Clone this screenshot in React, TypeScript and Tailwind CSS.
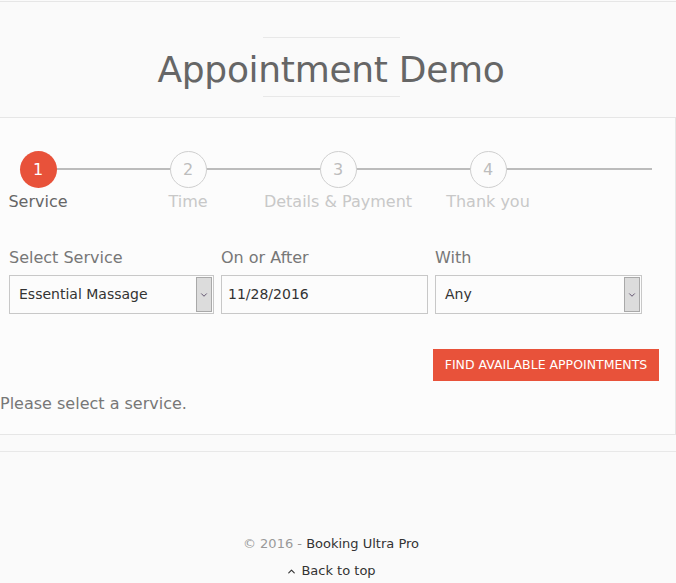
import { ChevronDown, ChevronUp } from "lucide-react";

const font = "font-['DejaVu_Sans',Verdana,sans-serif]";

const steps = [
  { n: 1, label: "Service", active: true },
  { n: 2, label: "Time" },
  { n: 3, label: "Details & Payment" },
  { n: 4, label: "Thank you" },
];

function SelectBox({ value }: { value: string }) {
  return (
    <div className="flex h-[39px] w-full items-stretch border border-[#c8c8c8] bg-[#fcfcfc]">
      <span className="flex flex-1 items-center pl-[9px] text-[14px] text-[#333]">{value}</span>
      <span className="my-px mr-px flex w-[16px] items-center justify-center border border-[#a9a9a9] bg-[#dcdcdc]">
        <ChevronDown className="size-[10px] text-[#4a3a5a]" strokeWidth={2} />
      </span>
    </div>
  );
}

export default function App() {
  return (
    <div className={`${font} min-h-[583px] w-[676px] overflow-hidden bg-[#fafafa]`}>
      <div className="h-px bg-[#e6e6e6] mt-px" />

      {/* title */}
      <div className="flex flex-col items-center pr-[14px] pt-[35px]">
        <div className="h-px w-[137px] bg-[#e8e8e8]" />
        <h1 className="mt-[10px] text-[36px] leading-[44px] tracking-[-0.3px] text-[#666]">Appointment Demo</h1>
        <div className="mt-[4px] h-px w-[137px] bg-[#e8e8e8]" />
      </div>

      {/* card */}
      <div className="mt-[20px] h-[318px] border-y border-r border-[#e6e6e6] bg-[#fcfcfc] pt-[33px]">
        {/* stepper */}
        <div className="relative h-[66px]">
          <div className="absolute left-[37px] top-[17px] h-[2px] w-[615px] bg-[#bcbcbc]" />
          {steps.map((s, i) => (
            <div
              key={s.n}
              className={[
                "absolute top-0 flex w-[160px] flex-col items-center",
                i === 0 ? "left-[-42px]" : i === 1 ? "left-[108px]" : i === 2 ? "left-[258px]" : "left-[408px]",
              ].join(" ")}
            >
              <span
                className={[
                  "relative flex size-[37px] items-center justify-center rounded-full text-[16px]",
                  s.active
                    ? "bg-[#e8523a] text-white"
                    : "border border-[#cfcfcf] bg-[#fcfcfc] text-[#bdbdbd]",
                ].join(" ")}
              >
                {s.n}
              </span>
              <span
                className={[
                  "mt-[3px] whitespace-nowrap text-[16px] leading-[22px]",
                  s.active ? "text-[#666]" : "text-[#c8c8c8]",
                ].join(" ")}
              >
                {s.label}
              </span>
            </div>
          ))}
        </div>

        {/* form */}
        <div className="mt-[31px] grid grid-cols-[205px_207px_207px] gap-x-[7px] pl-[9px]">
          <div className="flex flex-col gap-[7px]">
            <label className="text-[16px] leading-[20px] text-[#777]">Select Service</label>
            <SelectBox value="Essential Massage" />
          </div>
          <div className="flex flex-col gap-[7px]">
            <label className="text-[16px] leading-[20px] text-[#777]">On or After</label>
            <div className="flex h-[39px] items-center border border-[#c8c8c8] bg-[#fcfcfc] pl-[6px] text-[14px] text-[#333]">
              11/28/2016
            </div>
          </div>
          <div className="flex flex-col gap-[7px]">
            <label className="text-[16px] leading-[20px] text-[#777]">With</label>
            <SelectBox value="Any" />
          </div>
        </div>

        <div className="mt-[35px] flex justify-end pr-[16px]">
          <button
            type="button"
            className="h-[32px] w-[226px] bg-[#e8523a] text-[12.5px] uppercase text-white"
          >
            Find available appointments
          </button>
        </div>

        <p className="mt-[12px] text-[16px] leading-[22px] text-[#777]">Please select a service.</p>
      </div>

      <div className="mt-[16px] h-px bg-[#e8e8e8]" />

      {/* footer */}
      <div className="mt-[83px] flex flex-col items-center gap-[9px] pr-[14px] text-[13px]">
        <p className="leading-[18px]">
          <span className="text-[#999]">© 2016 - </span>
          <span className="text-[#333]">Booking Ultra Pro</span>
        </p>
        <p className="flex items-center gap-[4px] leading-[18px] text-[#333]">
          <ChevronUp className="size-[11px]" strokeWidth={2.5} />
          Back to top
        </p>
      </div>
    </div>
  );
}
